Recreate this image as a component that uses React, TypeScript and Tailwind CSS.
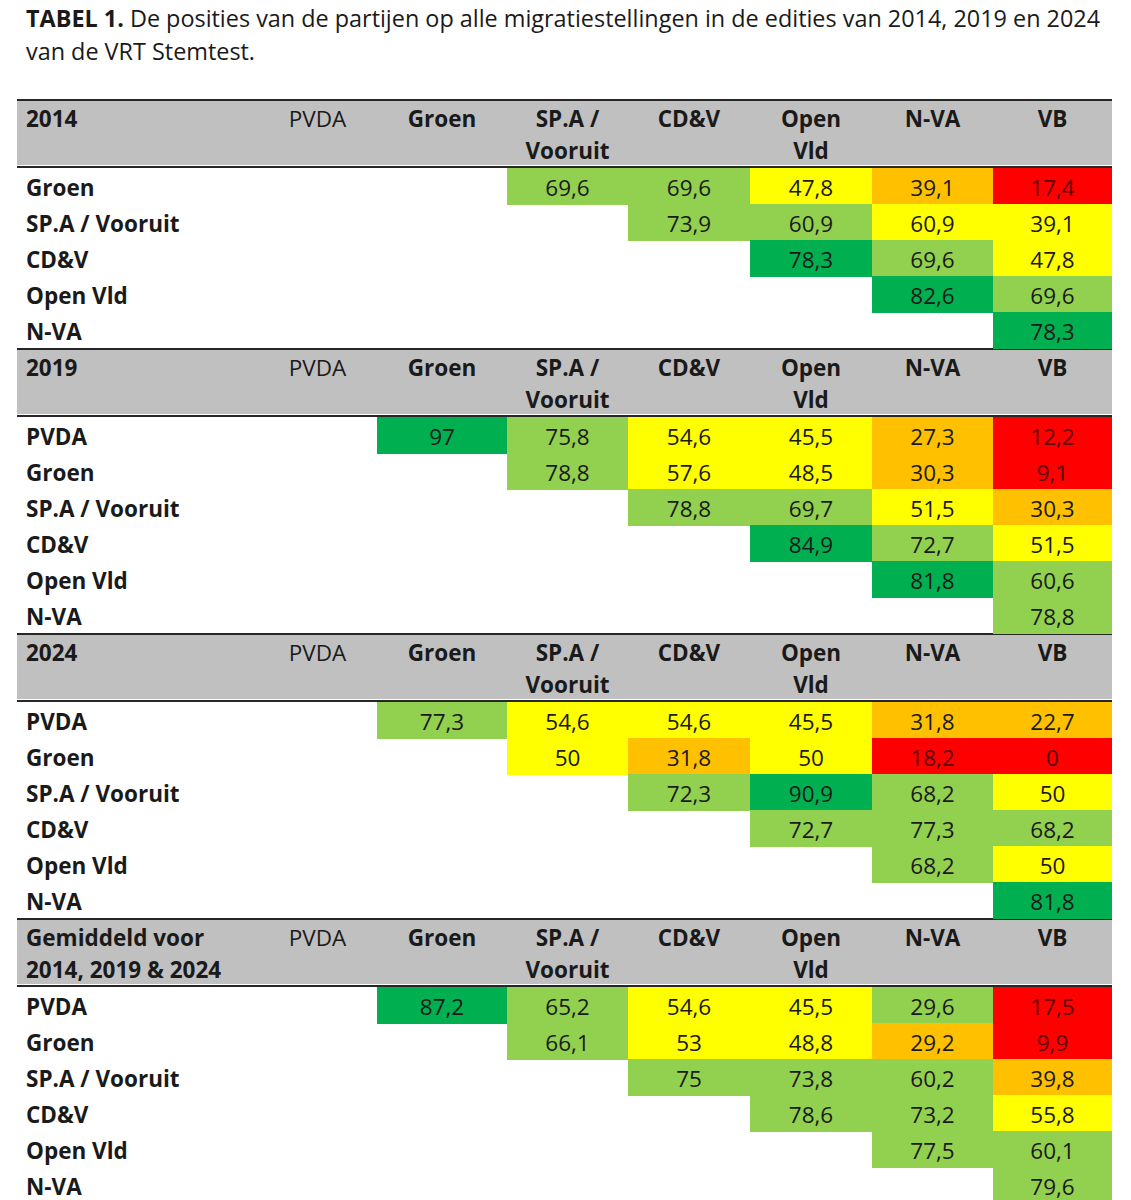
type Tone = "dg" | "lg" | "y" | "o" | "r";
type Cell = [string, Tone] | null;

const toneClass: Record<Tone, string> = {
  dg: "bg-[#00b050] text-[#1a1a1a]",
  lg: "bg-[#92d050] text-[#1a1a1a]",
  y: "bg-[#ffff00] text-[#1a1a1a]",
  o: "bg-[#ffc000] text-[#1a1a1a]",
  r: "bg-[#ff0000] text-[#5c0000]",
};

const cols = "grid grid-cols-[241px_119px_130px_121px_122px_122px_121px_119px]";

type Section = {
  title: string[];
  rows: { label: string; cells: Cell[] }[];
};

const sections: Section[] = [
  {
    title: ["2014"],
    rows: [
      { label: "Groen", cells: [null, null, ["69,6", "lg"], ["69,6", "lg"], ["47,8", "y"], ["39,1", "o"], ["17,4", "r"]] },
      { label: "SP.A / Vooruit", cells: [null, null, null, ["73,9", "lg"], ["60,9", "lg"], ["60,9", "y"], ["39,1", "y"]] },
      { label: "CD&V", cells: [null, null, null, null, ["78,3", "dg"], ["69,6", "lg"], ["47,8", "y"]] },
      { label: "Open Vld", cells: [null, null, null, null, null, ["82,6", "dg"], ["69,6", "lg"]] },
      { label: "N-VA", cells: [null, null, null, null, null, null, ["78,3", "dg"]] },
    ],
  },
  {
    title: ["2019"],
    rows: [
      { label: "PVDA", cells: [null, ["97", "dg"], ["75,8", "lg"], ["54,6", "y"], ["45,5", "y"], ["27,3", "o"], ["12,2", "r"]] },
      { label: "Groen", cells: [null, null, ["78,8", "lg"], ["57,6", "y"], ["48,5", "y"], ["30,3", "o"], ["9,1", "r"]] },
      { label: "SP.A / Vooruit", cells: [null, null, null, ["78,8", "lg"], ["69,7", "lg"], ["51,5", "y"], ["30,3", "o"]] },
      { label: "CD&V", cells: [null, null, null, null, ["84,9", "dg"], ["72,7", "lg"], ["51,5", "y"]] },
      { label: "Open Vld", cells: [null, null, null, null, null, ["81,8", "dg"], ["60,6", "lg"]] },
      { label: "N-VA", cells: [null, null, null, null, null, null, ["78,8", "lg"]] },
    ],
  },
  {
    title: ["2024"],
    rows: [
      { label: "PVDA", cells: [null, ["77,3", "lg"], ["54,6", "y"], ["54,6", "y"], ["45,5", "y"], ["31,8", "o"], ["22,7", "o"]] },
      { label: "Groen", cells: [null, null, ["50", "y"], ["31,8", "o"], ["50", "y"], ["18,2", "r"], ["0", "r"]] },
      { label: "SP.A / Vooruit", cells: [null, null, null, ["72,3", "lg"], ["90,9", "dg"], ["68,2", "lg"], ["50", "y"]] },
      { label: "CD&V", cells: [null, null, null, null, ["72,7", "lg"], ["77,3", "lg"], ["68,2", "lg"]] },
      { label: "Open Vld", cells: [null, null, null, null, null, ["68,2", "lg"], ["50", "y"]] },
      { label: "N-VA", cells: [null, null, null, null, null, null, ["81,8", "dg"]] },
    ],
  },
  {
    title: ["Gemiddeld voor", "2014, 2019 & 2024"],
    rows: [
      { label: "PVDA", cells: [null, ["87,2", "dg"], ["65,2", "lg"], ["54,6", "y"], ["45,5", "y"], ["29,6", "lg"], ["17,5", "r"]] },
      { label: "Groen", cells: [null, null, ["66,1", "lg"], ["53", "y"], ["48,8", "y"], ["29,2", "o"], ["9,9", "r"]] },
      { label: "SP.A / Vooruit", cells: [null, null, null, ["75", "lg"], ["73,8", "lg"], ["60,2", "lg"], ["39,8", "o"]] },
      { label: "CD&V", cells: [null, null, null, null, ["78,6", "lg"], ["73,2", "lg"], ["55,8", "y"]] },
      { label: "Open Vld", cells: [null, null, null, null, null, ["77,5", "lg"], ["60,1", "lg"]] },
      { label: "N-VA", cells: [null, null, null, null, null, null, ["79,6", "lg"]] },
    ],
  },
];

function HeaderRow({ title }: { title: string[] }) {
  return (
    <div className="border-t-2 border-b-2 border-[#262626] bg-white pb-px">
      <div className={`${cols} h-[64px] bg-[#c0c0c0] pt-[2px] leading-[32px]`}>
        <div className="pl-[9px] font-bold whitespace-nowrap">
          {title.map((t) => (
            <div key={t}>{t}</div>
          ))}
        </div>
        <div className="text-center">PVDA</div>
        <div className="text-center font-bold">Groen</div>
        <div className="text-center font-bold">
          SP.A /<br />
          Vooruit
        </div>
        <div className="text-center font-bold">CD&amp;V</div>
        <div className="text-center font-bold">
          Open
          <br />
          Vld
        </div>
        <div className="text-center font-bold">N-VA</div>
        <div className="text-center font-bold">VB</div>
      </div>
    </div>
  );
}

export default function App() {
  return (
    <div
      className="min-h-screen bg-white text-[22.5px] text-[#1a1a1a]"
      style={{ fontFamily: "'Open Sans', Lato, sans-serif" }}
    >
      <p className="pl-[26px] pt-[2px] text-[23.4px] leading-[33px] whitespace-nowrap">
        <span className="font-bold">TABEL 1.</span> De posities van de partijen op alle migratiestellingen in de edities
        van 2014, 2019 en 2024
        <br />
        van de VRT Stemtest.
      </p>

      <div className="ml-[17px] mt-[31px] w-[1095px]">
        {sections.map((s) => (
          <section key={s.title.join(" ")}>
            <HeaderRow title={s.title} />
            {s.rows.map((r) => (
              <div key={r.label} className={`${cols} h-[36px] items-stretch`}>
                <div className="flex items-center pl-[9px] pt-[3px] font-bold whitespace-nowrap">{r.label}</div>
                {r.cells.map((c, i) =>
                  c ? (
                    <div key={i} className={`flex items-center justify-center pt-[3px] ${toneClass[c[1]]}`}>
                      {c[0]}
                    </div>
                  ) : (
                    <div key={i} />
                  )
                )}
              </div>
            ))}
          </section>
        ))}
      </div>
    </div>
  );
}
